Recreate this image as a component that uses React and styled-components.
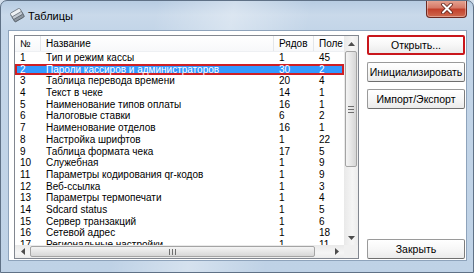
import React from "react";
import styled, { createGlobalStyle } from "styled-components";

const tables = [
  [1, "Тип и режим кассы", 1, 45],
  [2, "Пароли кассиров и администраторов", 30, 2],
  [3, "Таблица перевода времени", 20, 4],
  [4, "Текст в чеке", 14, 1],
  [5, "Наименование типов оплаты", 16, 1],
  [6, "Налоговые ставки", 6, 2],
  [7, "Наименование отделов", 16, 1],
  [8, "Настройка шрифтов", 1, 22],
  [9, "Таблица формата чека", 17, 5],
  [10, "Служебная", 1, 9],
  [11, "Параметры кодирования qr-кодов", 1, 9],
  [12, "Веб-ссылка", 1, 3],
  [13, "Параметры термопечати", 1, 4],
  [14, "Sdcard status", 1, 5],
  [15, "Сервер транзакций", 1, 6],
  [16, "Сетевой адрес", 1, 18],
  [17, "Региональные настройки", 1, 11],
];

const GlobalStyle = createGlobalStyle`
  html, body {
    margin: 0;
    padding: 0;
    background: #d3dfec;
  }
  body {
    font-family: "Liberation Sans", Arial, sans-serif;
  }
`;

const Window = styled.div`
  width: 474px;
  height: 273px;
  box-sizing: border-box;
  display: flex;
  flex-direction: column;
  padding: 0 6px 11px 7px;
  border: 1px solid #5f7186;
  border-radius: 7px 7px 0 0;
  background:
    linear-gradient(100deg, rgba(255,255,255,0.0) 30%, rgba(255,255,255,0.35) 45%, rgba(255,255,255,0) 60%),
    linear-gradient(to bottom, #b7cce2 0px, #c9d9ea 14px, #c3d5e8 29px, #bfd2e6 100%);
  overflow: hidden;
`;

const TitleBar = styled.div`
  height: 29px;
  flex: none;
  display: flex;
  align-items: flex-start;
  gap: 3px;
`;

const TitleIcon = styled.svg`
  margin: 7px 0 0 2px;
  flex: none;
`;

const Caption = styled.span`
  margin-top: 9px;
  font-size: 11px;
  line-height: 13px;
  color: #000;
  flex: 1;
`;

const CloseBox = styled.div`
  width: 41px;
  height: 18px;
  margin: -1px 0 0 0;
  flex: none;
  display: flex;
  align-items: center;
  justify-content: center;
  box-sizing: border-box;
  border: 1px solid #6b2a22;
  border-top: none;
  border-radius: 0 0 4px 4px;
  background: linear-gradient(to bottom, #e6a796 0%, #d67a68 45%, #c2412c 55%, #cf6a4f 100%);
  box-shadow: inset 0 0 0 1px rgba(255,255,255,0.35);
`;

const Client = styled.div`
  flex: 1;
  min-height: 0;
  display: flex;
  gap: 8px;
  padding: 4px 1px 1px 5px;
  background: #ffffff;
  border: 1px solid #8ea3bb;
`;

const ListBox = styled.div`
  width: 345px;
  flex: none;
  box-sizing: border-box;
  border: 1px solid #828790;
  display: grid;
  grid-template-columns: minmax(0, 1fr) 14px;
  grid-template-rows: minmax(0, 1fr) 13px;
  background: #fff;
`;

const Viewport = styled.div`
  overflow: hidden;
  min-height: 0;
  font-size: 10px;
  color: #000;
`;

const cols = "26px 233px 40px 30px";

const HeaderRow = styled.div`
  display: grid;
  grid-template-columns: ${cols};
  height: 15px;
  border-bottom: 1px solid #eef0f3;
  background: linear-gradient(to bottom, #ffffff, #f7f8fa);
`;

const HeaderCell = styled.div`
  padding-left: 5px;
  line-height: 15px;
  border-right: 1px solid ${(p) => (p.last ? "transparent" : "#e3e6ea")};
  white-space: nowrap;
  overflow: hidden;
`;

const Row = styled.div`
  display: grid;
  grid-template-columns: ${cols};
  height: 11.7px;
  line-height: 11.7px;
  background: ${(p) => (p.selected ? "#3399ff" : "transparent")};
  color: ${(p) => (p.selected ? "#ffffff" : "#000")};
  box-shadow: ${(p) => (p.selected ? "inset 0 0 0 2px #cf1f24" : "none")};
`;

const Cell = styled.div`
  padding-left: 5px;
  white-space: nowrap;
  overflow: hidden;
`;

const VScroll = styled.div`
  grid-row: 1;
  grid-column: 2;
  min-height: 0;
  display: flex;
  flex-direction: column;
  background: linear-gradient(to right, #e9e9e9, #f5f5f5 60%, #ececec);
`;

const HScroll = styled.div`
  grid-row: 2;
  grid-column: 1;
  display: flex;
  background: linear-gradient(to bottom, #e9e9e9, #f5f5f5 60%, #ececec);
`;

const Corner = styled.div`
  grid-row: 2;
  grid-column: 2;
  background: #f0f0f0;
`;

const Arrow = styled.div`
  flex: none;
  width: ${(p) => (p.horizontal ? "15px" : "14px")};
  height: ${(p) => (p.horizontal ? "13px" : "15px")};
  display: flex;
  align-items: center;
  justify-content: center;
`;

const Thumb = styled.div`
  flex: none;
  box-sizing: border-box;
  display: flex;
  align-items: center;
  justify-content: center;
  border: 1px solid #a4a4a4;
  border-radius: 2px;
  ${(p) =>
    p.horizontal
      ? `width: 285px; height: 11px; margin: 1px 0 0 0;
         background: linear-gradient(to bottom, #f4f4f4, #e6e6e6 50%, #d6d6d6);`
      : `width: 12px; height: 116px; margin: 0 0 0 1px;
         background: linear-gradient(to right, #f4f4f4, #e6e6e6 50%, #d6d6d6);`}
`;

const Track = styled.div`
  flex: 1;
`;

const ButtonColumn = styled.div`
  width: 98px;
  display: flex;
  flex-direction: column;
  gap: 7px;
`;

const Spacer = styled.div`
  flex: 1;
`;

const Button = styled.button`
  height: 20px;
  width: 98px;
  flex: none;
  box-sizing: border-box;
  padding: 0;
  font-family: "Liberation Sans", Arial, sans-serif;
  font-size: 10.5px;
  color: #000;
  border: ${(p) => (p.marked ? "2px solid #c9161c" : "1px solid #9a9a9a")};
  border-bottom-color: ${(p) => (p.marked ? "#c9161c" : "#6f6f6f")};
  border-right-color: ${(p) => (p.marked ? "#c9161c" : "#7d7d7d")};
  border-radius: 2px;
  background: linear-gradient(to bottom, #ffffff 0%, #f7f7f7 50%, #ebebeb 100%);
`;

function UpArrow() {
  return (
    <svg width="7" height="4" viewBox="0 0 7 4">
      <polygon points="0,4 7,4 3.5,0" fill="#4d4d4d" />
    </svg>
  );
}

function DownArrow() {
  return (
    <svg width="7" height="4" viewBox="0 0 7 4">
      <polygon points="0,0 7,0 3.5,4" fill="#4d4d4d" />
    </svg>
  );
}

function LeftArrow() {
  return (
    <svg width="4" height="7" viewBox="0 0 4 7">
      <polygon points="4,0 4,7 0,3.5" fill="#4d4d4d" />
    </svg>
  );
}

function RightArrow() {
  return (
    <svg width="4" height="7" viewBox="0 0 4 7">
      <polygon points="0,0 0,7 4,3.5" fill="#4d4d4d" />
    </svg>
  );
}

function Grip({ horizontal }) {
  return horizontal ? (
    <svg width="7" height="6" viewBox="0 0 7 6">
      <path d="M0.5 0v6M3.5 0v6M6.5 0v6" stroke="#6e6e6e" strokeWidth="1" />
    </svg>
  ) : (
    <svg width="6" height="7" viewBox="0 0 6 7">
      <path d="M0 0.5h6M0 3.5h6M0 6.5h6" stroke="#6e6e6e" strokeWidth="1" />
    </svg>
  );
}

function AppIcon() {
  return (
    <TitleIcon width="15" height="15" viewBox="0 0 15 15">
      <g transform="rotate(-30 7.5 7.5)">
        <rect x="2" y="6" width="11" height="6" rx="1" fill="#8d96a0" stroke="#4e5660" strokeWidth="0.8" />
        <rect x="2" y="4" width="11" height="5" rx="1" fill="#c3cad2" stroke="#5d6670" strokeWidth="0.8" />
        <rect x="2" y="2" width="11" height="4" rx="1" fill="#eef1f4" stroke="#6b747e" strokeWidth="0.8" />
      </g>
    </TitleIcon>
  );
}

function CloseGlyph() {
  return (
    <svg width="12" height="11" viewBox="0 0 12 11">
      <path d="M2 1.5l8 8M10 1.5l-8 8" stroke="#5b1f17" strokeWidth="3.6" strokeLinecap="round" />
      <path d="M2 1.5l8 8M10 1.5l-8 8" stroke="#ffffff" strokeWidth="2" strokeLinecap="round" />
    </svg>
  );
}

export default function App() {
  return (
    <>
      <GlobalStyle />
      <Window>
        <TitleBar>
          <AppIcon />
          <Caption>Таблицы</Caption>
          <CloseBox>
            <CloseGlyph />
          </CloseBox>
        </TitleBar>
        <Client>
          <ListBox>
            <Viewport>
              <HeaderRow>
                <HeaderCell>№</HeaderCell>
                <HeaderCell>Название</HeaderCell>
                <HeaderCell>Рядов</HeaderCell>
                <HeaderCell last>Поле</HeaderCell>
              </HeaderRow>
              {tables.map(([num, name, rows, fields]) => (
                <Row key={num} selected={num === 2}>
                  <Cell>{num}</Cell>
                  <Cell>{name}</Cell>
                  <Cell>{rows}</Cell>
                  <Cell>{fields}</Cell>
                </Row>
              ))}
            </Viewport>
            <VScroll>
              <Arrow>
                <UpArrow />
              </Arrow>
              <Thumb>
                <Grip />
              </Thumb>
              <Track />
              <Arrow>
                <DownArrow />
              </Arrow>
            </VScroll>
            <HScroll>
              <Arrow horizontal>
                <LeftArrow />
              </Arrow>
              <Thumb horizontal>
                <Grip horizontal />
              </Thumb>
              <Track />
              <Arrow horizontal>
                <RightArrow />
              </Arrow>
            </HScroll>
            <Corner />
          </ListBox>
          <ButtonColumn>
            <Button marked>Открыть...</Button>
            <Button>Инициализировать</Button>
            <Button>Импорт/Экспорт</Button>
            <Spacer />
            <Button>Закрыть</Button>
          </ButtonColumn>
        </Client>
      </Window>
    </>
  );
}
